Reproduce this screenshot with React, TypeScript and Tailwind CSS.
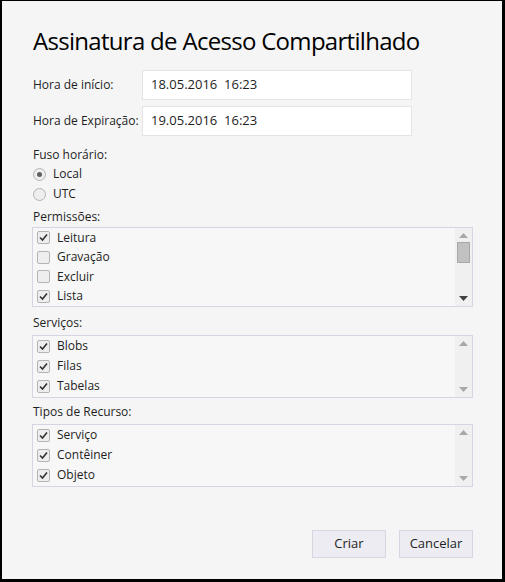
import React from 'react';

const font = { fontFamily: '"Open Sans", "Noto Sans", sans-serif' };

function Check({ on }: { on: boolean }) {
  return (
    <span className="w-[13px] h-[13px] border border-[#b4b4b4] bg-[#eeeeee] rounded-[2px] flex items-center justify-center shrink-0">
      {on && (
        <svg width="9" height="9" viewBox="0 0 9 9">
          <path d="M1 4.5 L3.5 7 L8 1.5" stroke="#333" strokeWidth="1.6" fill="none" />
        </svg>
      )}
    </span>
  );
}

function Radio({ on, label }: { on: boolean; label: string }) {
  return (
    <div className="flex items-center h-[20px] gap-[7px]">
      <span className="w-[13px] h-[13px] rounded-full border border-[#b4b4b4] bg-[#eeeeee] flex items-center justify-center">
        {on && <span className="w-[5px] h-[5px] rounded-full bg-[#606060]" />}
      </span>
      <span>{label}</span>
    </div>
  );
}

function Scrollbar({ thumb, darkDown }: { thumb?: boolean; darkDown?: boolean }) {
  return (
    <div className="w-[17px] bg-[#f0f0f0] flex flex-col items-center justify-between py-[5px]">
      <div className="flex flex-col items-center gap-[4px]">
        <svg width="9" height="5" viewBox="0 0 9 5">
          <path d="M0 5 L4.5 0 L9 5 Z" fill="#a8a8a8" />
        </svg>
        {thumb && <div className="w-[13px] h-[21px] bg-[#c1c1c1] border border-[#a8a8a8]" />}
      </div>
      <svg width="9" height="5" viewBox="0 0 9 5">
        <path d="M0 0 L9 0 L4.5 5 Z" fill={darkDown ? '#404040' : '#a8a8a8'} />
      </svg>
    </div>
  );
}

function ListBox({ items, height, thumb, darkDown }: { items: [string, boolean][]; height: string; thumb?: boolean; darkDown?: boolean }) {
  return (
    <div className={`flex border border-[#d6d6e2] bg-[#f7f7f7] ${height} ml-[-1px] mr-[29px]`}>
      <div className="flex-1 flex flex-col">
        {items.map(([label, on]) => (
          <div key={label} className="flex items-center h-[20px] pl-[4px] gap-[7px]">
            <Check on={on} />
            <span>{label}</span>
          </div>
        ))}
      </div>
      <Scrollbar thumb={thumb} darkDown={darkDown} />
    </div>
  );
}

export default function App() {
  return (
    <div style={font} className="w-[505px] h-[582px] bg-black pl-[2px] pt-[1px] pr-[3px] pb-[3px] text-[12px] text-[#1e1e1e]">
      <div className="w-full h-full bg-[#f5f5f5] pl-[31px] flex flex-col">
        <h1 className="text-[24px] text-black leading-[32px] mt-[24px] tracking-[-0.7px]">Assinatura de Acesso Compartilhado</h1>

        <div className="mt-[13px] flex flex-col gap-[6px]">
          <div className="flex items-center">
            <span className="w-[109px]">Hora de início:</span>
            <div className="w-[270px] h-[30px] bg-white border border-[#e3e3ea] flex items-center pl-[8px] text-[13px] whitespace-pre">18.05.2016  16:23</div>
          </div>
          <div className="flex items-center">
            <span className="w-[109px]">Hora de Expiração:</span>
            <div className="w-[270px] h-[30px] bg-white border border-[#e3e3ea] flex items-center pl-[8px] text-[13px] whitespace-pre">19.05.2016  16:23</div>
          </div>
        </div>

        <div className="mt-[10px] leading-[18px]">Fuso horário:</div>
        <div className="flex flex-col">
          <Radio on label="Local" />
          <Radio on={false} label="UTC" />
        </div>

        <div className="mt-[4px] h-[19px] leading-[18px]">Permissões:</div>
        <ListBox
          height="h-[80px]"
          thumb
          darkDown
          items={[
            ['Leitura', true],
            ['Gravação', false],
            ['Excluir', false],
            ['Lista', true],
          ]}
        />

        <div className="mt-[7px] h-[21px] leading-[18px]">Serviços:</div>
        <ListBox
          height="h-[63px]"
          items={[
            ['Blobs', true],
            ['Filas', true],
            ['Tabelas', true],
          ]}
        />

        <div className="mt-[5px] h-[21px] leading-[18px]">Tipos de Recurso:</div>
        <ListBox
          height="h-[63px]"
          items={[
            ['Serviço', true],
            ['Contêiner', true],
            ['Objeto', true],
          ]}
        />

        <div className="flex justify-end gap-[13px] mt-[43px] mr-[29px]">
          <button className="w-[74px] h-[28px] bg-[#ececf2] border border-[#d6d6e2] text-[13px] text-[#1e1e1e]">Criar</button>
          <button className="w-[74px] h-[28px] bg-[#ececf2] border border-[#d6d6e2] text-[13px] text-[#1e1e1e]">Cancelar</button>
        </div>
      </div>
    </div>
  );
}
